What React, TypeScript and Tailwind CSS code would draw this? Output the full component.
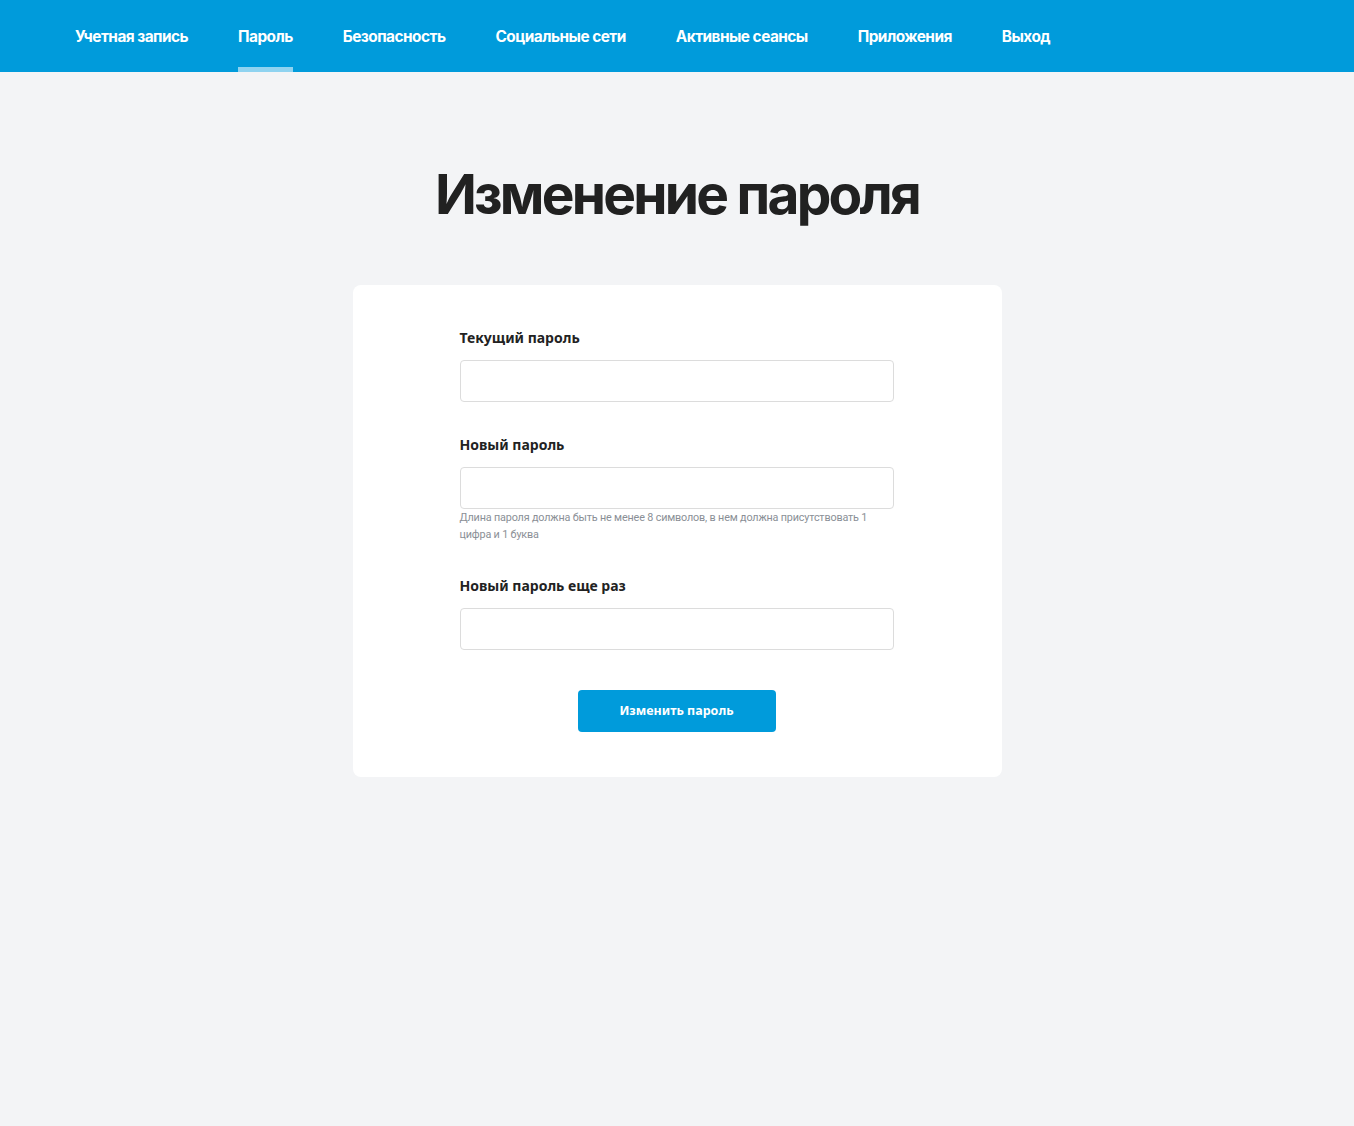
const navItems = [
  "Учетная запись",
  "Пароль",
  "Безопасность",
  "Социальные сети",
  "Активные сеансы",
  "Приложения",
  "Выход",
]

type FieldProps = {
  label: string
  hint?: string
}

const Field = ({ label, hint }: FieldProps) => {
  return (
    <div className="flex flex-col">
      <label className="text-[14px] font-bold text-[#222] leading-[20px] mb-[12px]">{label}</label>
      <input
        type="password"
        className="h-[42px] w-full rounded-[4px] border border-[#dcdcdc] bg-white px-3 outline-none"
      />
      {hint && (
        <p
          className="text-[10.8px] leading-[17px] tracking-[-0.015em] text-[#8a8f96]"
          style={{ fontFamily: "Roboto, 'Noto Sans', sans-serif" }}
        >
          {hint}
        </p>
      )}
    </div>
  )
}

export default function App() {
  const active = "Пароль"

  return (
    <div className="min-h-[1126px] bg-[#f3f4f6]" style={{ fontFamily: "'Noto Sans', 'Open Sans', sans-serif" }}>
      <nav className="h-[72px] bg-[#009bdb]">
        <ul className="flex h-full gap-[50px] pl-[75px]" style={{ fontFamily: "Inter, 'Noto Sans', sans-serif" }}>
          {navItems.map((item) => (
            <li key={item} className="relative flex h-full items-center">
              <a className="pt-[2px] text-[15.4px] font-bold tracking-[-0.035em] text-white">{item}</a>
              {item === active && (
                <span className="absolute bottom-0 left-0 right-0 h-[5px] bg-[#8fd3f0]" />
              )}
            </li>
          ))}
        </ul>
      </nav>

      <main className="flex flex-col items-center pt-[86px]">
        <h1
          className="text-[55px] font-bold leading-[72px] tracking-[-0.05em] text-[#212121]"
          style={{ fontFamily: "Inter, 'Noto Sans', sans-serif" }}
        >
          Изменение пароля
        </h1>

        <div className="mt-[55px] w-[649px] rounded-[8px] bg-white pl-[107px] pr-[108px] pt-[43px] pb-[45px]">
          <div className="flex flex-col gap-[33px]">
            <Field label="Текущий пароль" />
            <Field
              label="Новый пароль"
              hint="Длина пароля должна быть не менее 8 символов, в нем должна присутствовать 1 цифра и 1 буква"
            />
            <Field label="Новый пароль еще раз" />
          </div>
          <div className="mt-[40px] flex justify-center">
            <button className="h-[42px] w-[198px] rounded-[4px] bg-[#009bdb] text-[12.5px] font-bold text-white">
              Изменить пароль
            </button>
          </div>
        </div>
      </main>
    </div>
  )
}
